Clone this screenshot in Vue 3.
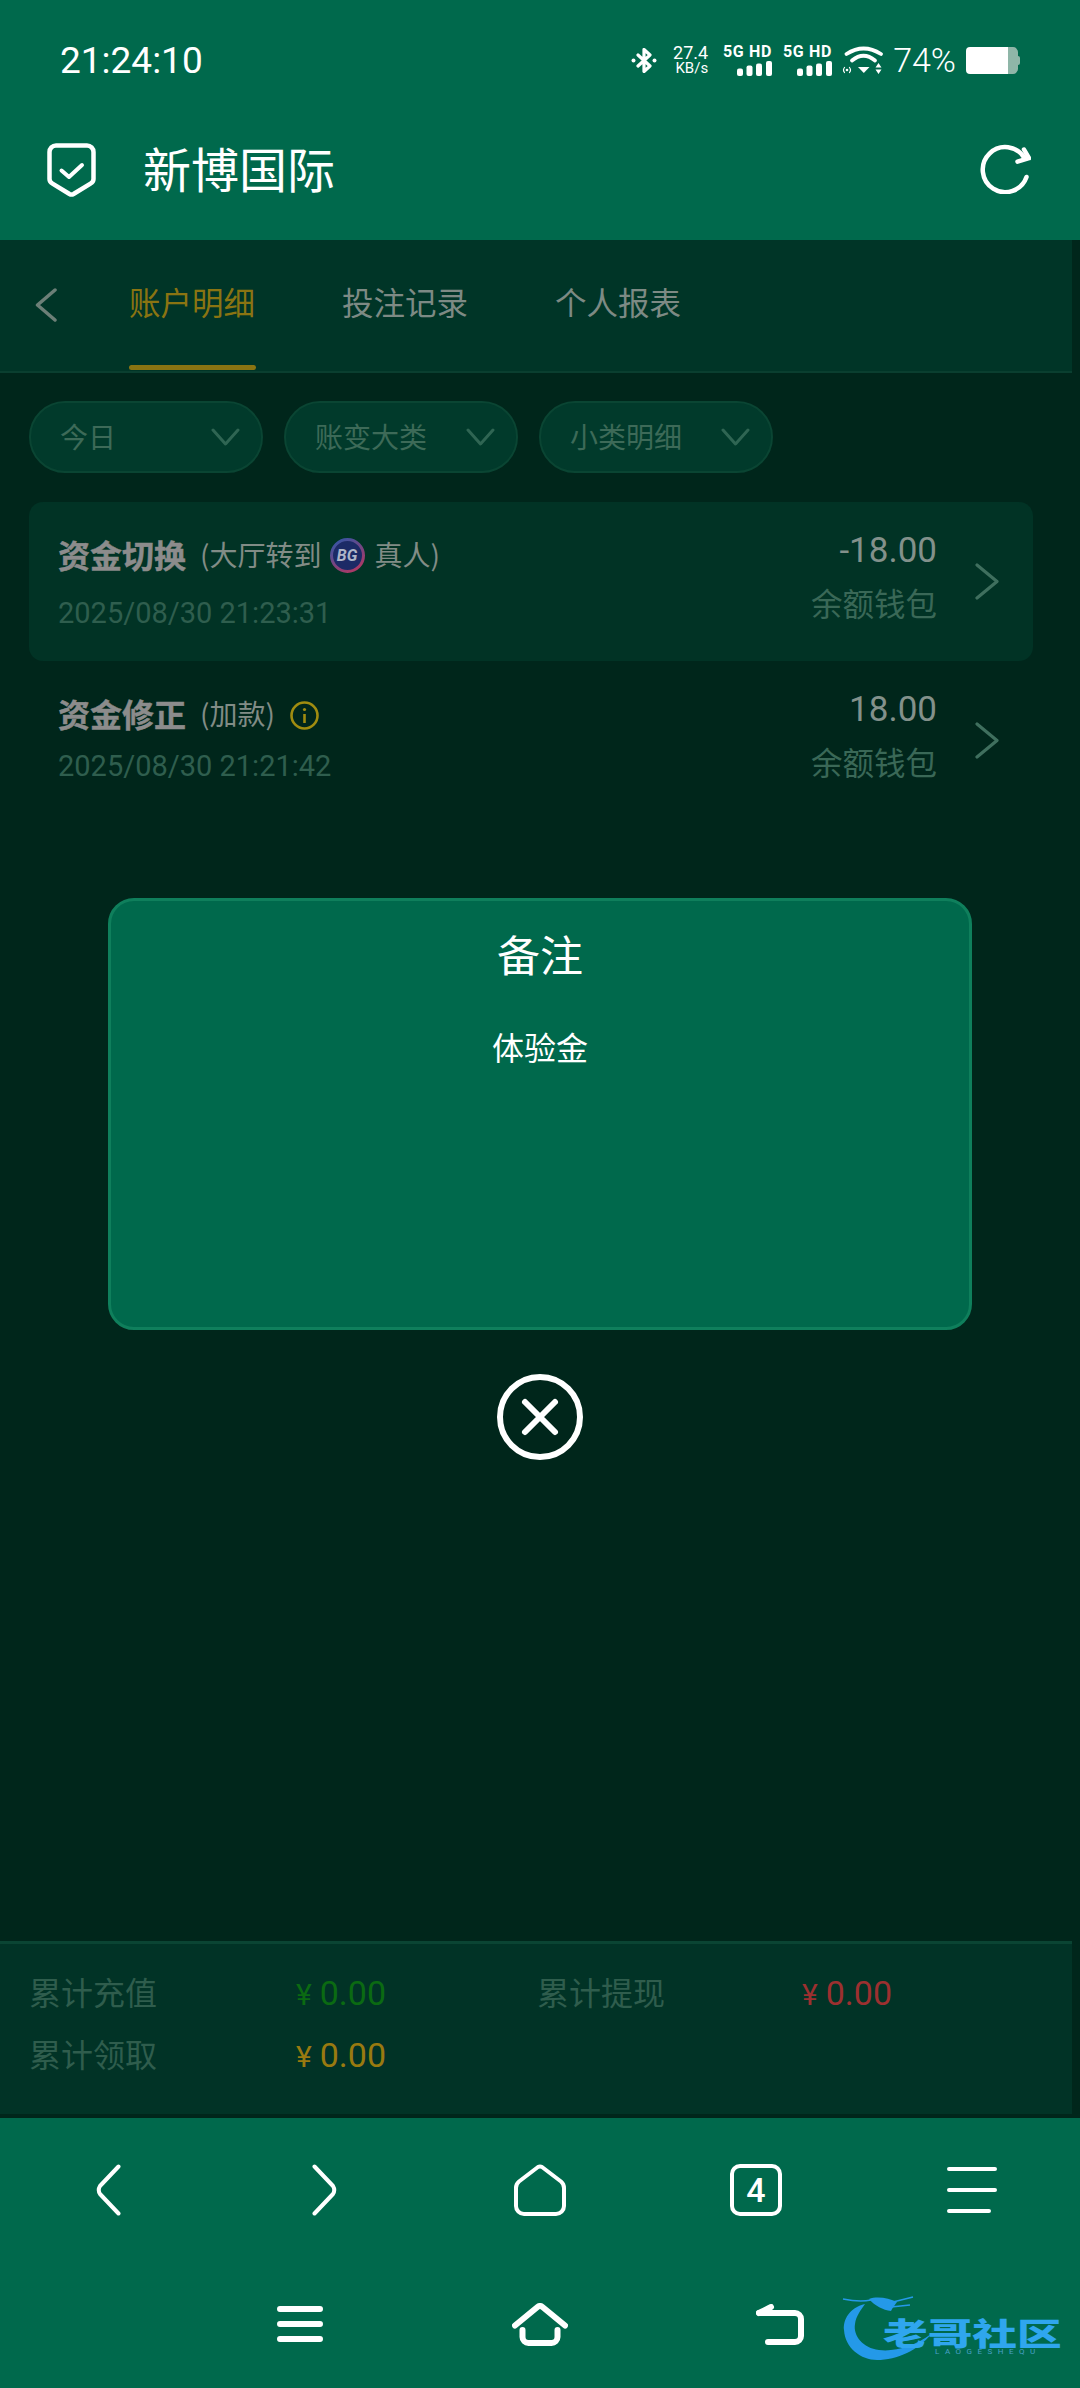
<script setup>
const tabs = ['账户明细', '投注记录', '个人报表']
const pills = ['今日', '账变大类', '小类明细']
const bars = [
  { x: 0, h: 7.5 },
  { x: 9.5, h: 10.5 },
  { x: 19, h: 12.5 },
  { x: 29, h: 15 }
]
const totals = [
  { label: '累计充值', value: '0.00', tone: 'green' },
  { label: '累计提现', value: '0.00', tone: 'red' },
  { label: '累计领取', value: '0.00', tone: 'orange' }
]
</script>

<template>
  <div class="app">
    <header class="top">
      <div class="status">
        <span class="time">21:24:10</span>
        <div class="status-right">
          <svg class="bt" width="26" height="25" viewBox="0 0 26 25" fill="none" stroke="#fff" stroke-width="3.2" stroke-linejoin="round" stroke-linecap="round">
            <path d="M7 7l12 11-6 5.500V1.500L19 7 7 18" />
            <circle cx="2.500" cy="12.500" r="2" fill="#fff" stroke="none" />
            <circle cx="23.500" cy="12.500" r="2" fill="#fff" stroke="none" />
          </svg>
          <div class="speed"><span class="speed-num">27.4</span><span class="speed-unit">KB/s</span></div>
          <div v-for="n in 2" :key="n" class="net">
            <span class="net-label">5G HD</span>
            <svg class="net-bars" width="35" height="15" viewBox="0 0 35 15" fill="#fff">
              <rect v-for="b in bars" :key="b.x" :x="b.x" :y="15 - b.h" width="6" :height="b.h" rx="2" />
            </svg>
          </div>
          <svg class="wifi" width="41" height="28" viewBox="0 0 41 28" fill="none" stroke="#fff" stroke-linecap="round">
            <path d="M4.500 8Q21.500-3 39 8" stroke-width="3.800" />
            <path d="M10 14.500Q21.500 5 33 14.500" stroke-width="3.800" />
            <path d="M16 21h11.500l-5.700 6z" fill="#fff" stroke="none" />
            <path d="M2.500 21.500q-2 2.500 0 5M7.500 21.500q2 2.500 0 5" stroke-width="1.200" />
            <circle cx="5" cy="24" r="1.300" fill="#fff" stroke="none" />
            <path d="M33.500 21.500h6l-3-4.500zM33.500 23.500h6l-3 4.500z" fill="#fff" stroke="none" />
          </svg>
          <span class="battery-text">74%</span>
          <svg class="battery" width="54" height="27" viewBox="0 0 54 27">
            <path d="M46 2h3a3 3 0 0 1 3 3v17a3 3 0 0 1-3 3h-3z" fill="#8fb6a8" />
            <path d="M51 9h1a2 2 0 0 1 2 2v5a2 2 0 0 1-2 2h-1z" fill="#8fb6a8" />
            <path d="M4 0h34v27H4a4 4 0 0 1-4-4V4a4 4 0 0 1 4-4z" fill="#fff" />
            <rect x="38" width="13" height="27" rx="4" fill="#8fb6a8" />
            <rect x="36" width="6" height="27" fill="#fff" />
          </svg>
        </div>
      </div>
      <div class="titlebar">
        <svg class="shield" width="49" height="54" viewBox="0 0 49 54" fill="none" stroke="#fff" stroke-width="4.500" stroke-linecap="round" stroke-linejoin="round">
          <path d="M9 2.500h31a6.500 6.500 0 0 1 6.500 6.500v27c0 2-1 3.500-3 4.600L26.500 51a4 4 0 0 1-4 0L5.500 40.600C3.500 39.500 2.500 38 2.500 36V9A6.500 6.500 0 0 1 9 2.500z" />
          <path d="M14.500 27.500l7.500 6.500L35 22" stroke-width="4" />
        </svg>
        <span class="title">新博国际</span>
        <svg class="refresh" width="51" height="50" viewBox="0 0 51 50" fill="none" stroke="#fff" stroke-width="4.500" stroke-linecap="round" stroke-linejoin="round">
          <path d="M46.500 33A22.500 22.500 0 1 1 44.500 14" />
          <path d="M44 5.500l5 8.700-11.500 3.500" />
        </svg>
      </div>
    </header>

    <main class="main">
      <nav class="tabbar">
        <svg class="back" width="22" height="34" viewBox="0 0 22 34" fill="none" stroke="#6c7f77" stroke-width="3.500" stroke-linecap="round" stroke-linejoin="round">
          <path d="M20 2L2.500 17 20 32" />
        </svg>
        <div v-for="(t, i) in tabs" :key="t" class="tab" :class="{ active: i === 0 }">
          <span class="tab-text">{{ t }}</span>
          <span class="tab-line"></span>
        </div>
      </nav>

      <section class="filters">
        <div v-for="p in pills" :key="p" class="pill">
          <span class="pill-text">{{ p }}</span>
          <svg width="29" height="18" viewBox="0 0 29 18" fill="none" stroke="#2f6553" stroke-width="3" stroke-linecap="round" stroke-linejoin="round">
            <path d="M2 2l12.500 14L27 2" />
          </svg>
        </div>
      </section>

      <section class="rows">
        <article class="row row-selected">
          <div class="row-left">
            <div class="row-title">
              <strong>资金切换</strong>
              <span class="row-sub">(大厅转到</span>
              <svg class="bg-logo" width="35" height="35" viewBox="0 0 35 35">
                <defs>
                  <linearGradient id="bgRing" x1="0" y1="0" x2="0.6" y2="1">
                    <stop offset="0" stop-color="#2c56a8" />
                    <stop offset="1" stop-color="#a83a68" />
                  </linearGradient>
                </defs>
                <circle cx="17.500" cy="17.500" r="16" fill="#1c2a66" stroke="url(#bgRing)" stroke-width="3" />
                <text x="17" y="23" text-anchor="middle" class="bg-text">BG</text>
              </svg>
              <span class="row-sub">真人)</span>
            </div>
            <div class="row-date">2025/08/30 21:23:31</div>
          </div>
          <div class="row-right">
            <div class="row-amount">-18.00</div>
            <div class="row-wallet">余额钱包</div>
          </div>
          <svg class="row-arrow" width="24" height="37" viewBox="0 0 24 37" fill="none" stroke="#3f6f5e" stroke-width="3.200" stroke-linecap="round" stroke-linejoin="round">
            <path d="M2 2l20 16.500L2 35" />
          </svg>
        </article>
        <article class="row">
          <div class="row-left">
            <div class="row-title">
              <strong>资金修正</strong>
              <span class="row-sub">(加款)</span>
              <svg class="info" width="29" height="29" viewBox="0 0 29 29" fill="none" stroke="#a08c10" stroke-width="2.600">
                <circle cx="14.500" cy="14.500" r="13" />
                <path d="M14.500 13v9" />
                <circle cx="14.500" cy="8.500" r="1.600" fill="#a08c10" stroke="none" />
              </svg>
            </div>
            <div class="row-date row-date-tight">2025/08/30 21:21:42</div>
          </div>
          <div class="row-right">
            <div class="row-amount">18.00</div>
            <div class="row-wallet">余额钱包</div>
          </div>
          <svg class="row-arrow" width="24" height="37" viewBox="0 0 24 37" fill="none" stroke="#3f6f5e" stroke-width="3.200" stroke-linecap="round" stroke-linejoin="round">
            <path d="M2 2l20 16.500L2 35" />
          </svg>
        </article>
      </section>

      <footer class="totals">
        <template v-for="t in totals" :key="t.label">
          <span class="total-label">{{ t.label }}</span>
          <span class="total-value" :class="t.tone"><span class="yen">¥</span>{{ t.value }}</span>
        </template>
      </footer>
    </main>

    <div class="bottom">
      <div class="browser-row">
        <svg width="25" height="52" viewBox="0 0 25 52" fill="none" stroke="#fff" stroke-width="4" stroke-linecap="round" stroke-linejoin="round">
          <path d="M22.500 2.500L4 22Q1.500 26 4 30l18.500 19.500" />
        </svg>
        <svg width="25" height="52" viewBox="0 0 25 52" fill="none" stroke="#fff" stroke-width="4" stroke-linecap="round" stroke-linejoin="round">
          <path d="M2.500 2.500L21 22q2.500 4 0 8L2.500 49.500" />
        </svg>
        <svg width="52" height="52" viewBox="0 0 52 52" fill="none" stroke="#fff" stroke-width="4" stroke-linejoin="round">
          <path d="M24 3a4 4 0 0 1 4 0l19 14.500Q50 20 50 24v18a8 8 0 0 1-8 8H10a8 8 0 0 1-8-8V24q0-4 3-6.500z" />
        </svg>
        <div class="tab-count">4</div>
        <svg width="50" height="46" viewBox="0 0 50 46" fill="none" stroke="#fff" stroke-width="4" stroke-linecap="round">
          <path d="M2 2h46M2 23h46M2 44h40" />
        </svg>
      </div>
      <div class="system-row">
        <svg width="46" height="36" viewBox="0 0 46 36" fill="none" stroke="#fff" stroke-width="6" stroke-linecap="round">
          <path d="M3 3h40M3 18h40M3 33h40" />
        </svg>
        <svg width="56" height="43" viewBox="0 0 56 43" fill="none" stroke="#fff" stroke-width="6" stroke-linecap="round" stroke-linejoin="round">
          <path d="M3 22.500L25.500 4q2.500-2 5 0L53 22.500" />
          <path d="M10.500 27v7a6 6 0 0 0 6 6h23a6 6 0 0 0 6-6v-7" />
        </svg>
        <svg width="48" height="41" viewBox="0 0 48 41" fill="none" stroke="#fff" stroke-width="6" stroke-linecap="round" stroke-linejoin="round">
          <path d="M3 9h36a6 6 0 0 1 6 6v17a6 6 0 0 1-6 6H12" />
          <path d="M3 9l12-6" />
        </svg>
      </div>
      <div class="watermark">
        <svg width="240" height="90" viewBox="0 0 240 90" fill="#2499e8">
          <path d="M30 14C14 18 8 30 9 40c1 18 17 30 33 30 20 0 42-10 54-26-16 12-36 18-52 16-16-2-26-14-24-26 1-8 6-14 10-20z" />
          <path d="M34 9c8-3 20-1 28 3-2 3-4 5-6 9-8-1-16-5-22-12z" />
          <path d="M8 9c10 2 18 3 28 1M58 12l20-5M56 17l19-2" fill="none" stroke="#2499e8" stroke-width="1.500" />
        </svg>
        <span class="wm-text">老哥社区</span>
        <span class="wm-sub">LAOGESHEQU</span>
      </div>
    </div>

    <div class="overlay">
      <div class="modal">
        <div class="modal-title">备注</div>
        <div class="modal-body">体验金</div>
      </div>
      <svg class="close" width="86" height="86" viewBox="0 0 86 86" fill="none" stroke="#fff" stroke-linecap="round">
        <circle cx="43" cy="43" r="40" stroke-width="6" />
        <path d="M28 28l30 30M58 28L28 58" stroke-width="6" />
      </svg>
    </div>
  </div>
</template>

<style>
html, body { background: #00261b; }
</style>

<style scoped>
.app {
  position: relative;
  width: 1080px;
  height: 2388px;
  display: flex;
  flex-direction: column;
  overflow: hidden;
  background: #00261b;
  font-family: "Noto Sans CJK SC", Roboto, sans-serif;
}
.top { height: 240px; background: #00694c; flex: none; color: #fff; }
.status {
  height: 100px;
  box-sizing: border-box;
  padding: 20px 60px 0 60px;
  display: flex;
  align-items: center;
  justify-content: space-between;
}
.time { font: 400 37px/1 Roboto, sans-serif; }
.status-right { display: flex; align-items: center; }
.speed { margin-left: 15px; width: 36px; display: flex; flex-direction: column; align-items: flex-end; font-family: Roboto, sans-serif; }
.speed-num { font-size: 18px; line-height: 16px; }
.speed-unit { font-size: 15px; line-height: 14px; }
.net { margin-left: 16px; width: 48px; display: flex; flex-direction: column; align-items: flex-end; }
.net + .net { margin-left: 12px; }
.net-label { font: 700 16px/16px Roboto, sans-serif; letter-spacing: 0.7px; white-space: nowrap; }
.net-bars { display: block; margin-top: 1px; }
.wifi { margin-left: 10px; }
.battery-text { margin-left: 10px; font: 300 34px/1 Roboto, sans-serif; }
.battery { margin-left: 10px; }
.titlebar {
  height: 140px;
  display: flex;
  align-items: center;
  padding: 0 49px 0 47px;
}
.title { margin: 0 0 6px 47px; font-size: 48px; line-height: 60px; }
.refresh { margin: 0 0 2px auto; }

.main { flex: 1; display: flex; flex-direction: column; min-height: 0; }
.tabbar {
  height: 133px;
  box-sizing: border-box;
  margin-right: 8px;
  background: #003527;
  border-bottom: 2px solid #0a3f30;
  display: flex;
  padding-left: 35px;
}
.back { margin-top: 48px; margin-right: 72px; }
.tab { width: 127px; margin-right: 86px; display: flex; flex-direction: column; padding-top: 41px; color: #7d8a84; }
.tab-text { font-size: 31.5px; line-height: 40px; white-space: nowrap; }
.tab-line { height: 5px; margin-top: 44px; border-radius: 3px; }
.tab.active { color: #8a7412; }
.tab.active .tab-line { background: #8a7412; }

.filters { display: flex; gap: 21px; margin: 28px 0 29px 29px; }
.pill {
  width: 234px;
  height: 72px;
  box-sizing: border-box;
  border: 2px solid #0a4533;
  border-radius: 36px;
  background: #013a2b;
  color: #3d6a58;
  font-size: 28px;
  display: flex;
  align-items: center;
  justify-content: space-between;
  padding: 0 21px 0 29px;
}
.pill-text { margin-bottom: 3px; }

.rows { margin: 0 47px 0 29px; flex: 1; }
.row { height: 159px; display: flex; padding: 0 34px 0 29px; border-radius: 14px; }
.row-selected { background: #013325; }
.row-left { flex: 1; padding-top: 30px; }
.row-title { height: 44px; display: flex; align-items: center; color: #818c86; }
.row-title strong { font-size: 32px; font-weight: 700; color: #8c8c8c; line-height: 44px; margin-right: 14px; -webkit-text-stroke: 0.5px #8c8c8c; }
.row-sub { font-size: 28px; line-height: 44px; }
.bg-logo { margin: 3px 9px 0; }
.bg-text { font: italic 700 16px Roboto, sans-serif; fill: #aeb4c8; }
.info { margin-left: 15px; margin-top: 5px; }
.row-date { margin-top: 19px; font: 400 29px/36px Roboto, sans-serif; color: #2f5e4e; white-space: nowrap; }
.row-date-tight { margin-top: 13px; }
.row-right { padding-top: 28px; display: flex; flex-direction: column; align-items: flex-end; }
.row-amount { font: 400 35px/42px Roboto, sans-serif; color: #83918b; }
.row-wallet { margin-top: 10px; font-size: 31.5px; line-height: 40px; color: #3a6857; white-space: nowrap; }
.row-arrow { margin-left: 38px; align-self: center; }

.totals {
  height: 173px;
  box-sizing: border-box;
  margin: 0 8px 4px 0;
  padding: 30px 0 0 29px;
  background: #013326;
  border-top: 3px solid #0a4433;
  display: grid;
  grid-template-columns: 267px 241px 265px 1fr;
  grid-auto-rows: 40px;
  row-gap: 22px;
  align-items: center;
  font-size: 32px;
}
.total-label { color: #2f5d4d; white-space: nowrap; line-height: 40px; margin-top: -6px; }
.total-value { font: 400 34px/40px Roboto, sans-serif; }
.yen { font-size: 30px; margin-right: 8px; }
.green { color: #0b6a12; }
.red { color: #9c3030; }
.orange { color: #997a10; }

.bottom { position: relative; height: 270px; flex: none; background: #00694c; }
.browser-row { height: 144px; display: grid; grid-template-columns: repeat(5, 216px); justify-items: center; align-items: center; }
.tab-count {
  width: 52px;
  height: 52px;
  box-sizing: border-box;
  border: 4px solid #fff;
  border-radius: 10px;
  color: #fff;
  font: 500 34px/44px Roboto, sans-serif;
  text-align: center;
}
.system-row { height: 124px; padding: 0 180px; display: grid; grid-template-columns: repeat(3, 240px); justify-items: center; align-items: center; }
.watermark { position: absolute; left: 835px; top: 172px; width: 240px; height: 90px; }
.watermark svg { display: block; }
.wm-text {
  position: absolute;
  left: 48px;
  top: 28px;
  font-size: 31px;
  font-weight: 900;
  line-height: 27px;
  color: #2fa6ee;
  white-space: nowrap;
  transform: scaleX(1.44);
  transform-origin: left center;
}
.wm-sub {
  position: absolute;
  left: 100px;
  top: 57px;
  font: 400 8px/10px Roboto, sans-serif;
  letter-spacing: 5.500px;
  color: #4aa0c8;
  white-space: nowrap;
}

.overlay {
  position: absolute;
  left: 0;
  right: 0;
  top: 0;
  padding-top: 898px;
  display: flex;
  flex-direction: column;
  align-items: center;
}
.modal {
  width: 864px;
  height: 432px;
  box-sizing: border-box;
  background: #00694c;
  border: 3px solid #0f7f5c;
  border-radius: 26px;
  color: #fff;
  text-align: center;
}
.modal-title { margin-top: 22px; font-size: 43px; line-height: 60px; }
.modal-body { margin-top: 41px; font-size: 32px; line-height: 44px; }
.close { margin-top: 44px; }
</style>
